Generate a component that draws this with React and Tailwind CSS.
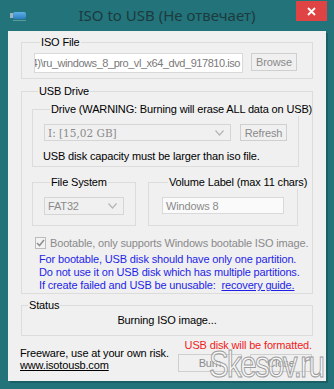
import React from 'react'

function Chevron() {
  return (
    <svg width="9" height="6" viewBox="0 0 9 6" className="shrink-0">
      <polyline points="0.5,0.5 4.5,5 8.5,0.5" fill="none" stroke="#b5b5b5" strokeWidth="1.2" />
    </svg>
  )
}

function Group({ label, className = '', children }) {
  return (
    <fieldset className={`min-w-0 border border-[#dcdcdc] ${className}`}>
      <legend className="ml-[6px] px-[1px] leading-[14px] text-black whitespace-nowrap">{label}</legend>
      {children}
    </fieldset>
  )
}

function DisabledButton({ children, className = '' }) {
  return (
    <div className={`flex items-center justify-center border border-[#cfcfcf] bg-[#f0f0f0] text-[#8a8a8a] ${className}`}>
      {children}
    </div>
  )
}

export default function App() {
  return (
    <div className="w-[334px] h-[389px] bg-[#22737a] flex flex-col relative overflow-hidden font-['Liberation_Sans',Arial,sans-serif]">
      {/* Title bar */}
      <div className="h-[31px] grid grid-cols-[1fr_auto_1fr] shrink-0">
        <div className="pl-[10px] pt-[12px]">
          <div className="flex items-center">
            <div className="w-[3px] h-[5px] bg-[#9fb3bd]" />
            <div className="w-[13px] h-[7px] rounded-[2px] bg-gradient-to-b from-[#5fb0e6] to-[#2a7fc0]" />
          </div>
          <div className="ml-[3px] mt-[1px] w-[13px] h-[1px] bg-[#5a9aa0]" />
        </div>
        <div className="pt-[5px] text-[15px] leading-[20px] text-[#1d3b3e] whitespace-nowrap font-['Noto_Sans',sans-serif]">
          ISO to USB (Не отвечает)
        </div>
        <div className="flex justify-end pr-[7px] pt-[1px]">
          <div className="w-[31px] h-[20px] bg-[#e04343] flex items-center justify-center">
            <svg width="9" height="9" viewBox="0 0 9 9">
              <path d="M1 1 L8 8 M8 1 L1 8" stroke="#fff" strokeWidth="1.8" />
            </svg>
          </div>
        </div>
      </div>

      {/* Client area */}
      <div className="mx-[8px] h-[350px] bg-[#f0f0f0] px-[13px] pt-[4px] shadow-[2px_2px_0_#1b5f66] text-[11px] tracking-[-0.15px] leading-[14px] text-black whitespace-nowrap">
        <Group label="ISO File" className="pl-[12px] pt-[4px] pb-[5px]">
          <div className="flex items-start gap-[8px]">
            <div className="w-[209px] h-[20px] border border-[#d9d9d9] bg-white flex justify-end items-center overflow-hidden pr-[2px] text-[#7a7a7a]">
              <span className="tracking-[-0.45px]">D:\Загрузки\Windows 8 (x64)\ru_windows_8_pro_vl_x64_dvd_917810.iso</span>
            </div>
            <DisabledButton className="w-[46px] h-[18px]">Browse</DisabledButton>
          </div>
        </Group>

        <Group label="USB Drive" className="mt-[5px] pl-[10px] pr-[13px] pb-[1px]">
          <Group label="Drive (WARNING: Burning will erase ALL data on USB)" className="mt-[4px] pl-[11px] pt-[8px] pb-[3px]">
            <div className="flex items-start gap-[9px]">
              <div className="w-[187px] h-[17px] border border-[#d5d5d5] bg-[#f0f0f0] flex items-center justify-between pl-[3px] pr-[6px] text-[#8a8a8a] font-['DejaVu_Serif',serif] text-[10.5px] tracking-normal">
                <span>I: [15,02 GB]</span>
                <Chevron />
              </div>
              <DisabledButton className="w-[47px] h-[17px]">Refresh</DisabledButton>
            </div>
            <div className="mt-[8px] -ml-[1px]">USB disk capacity must be larger than iso file.</div>
          </Group>

          <div className="flex gap-[12px] mt-[8px]">
            <Group label="File System" className="w-[104px] pl-[11px] pt-[8px] pb-[10px]">
              <div className="w-[80px] h-[18px] border border-[#d5d5d5] bg-[#f0f0f0] flex items-center justify-between pl-[3px] pr-[6px] text-[#8a8a8a]">
                <span>FAT32</span>
                <Chevron />
              </div>
            </Group>
            <Group label="Volume Label (max 11 chars)" className="w-[150px] pl-[13px] pt-[8px] pb-[11px]">
              <div className="w-[122px] h-[17px] border border-[#d9d9d9] bg-[#fafafa] flex items-center pl-[3px] text-[#8a8a8a]">
                Windows 8
              </div>
            </Group>
          </div>

          <div className="flex items-center gap-[4px] mt-[10px] pl-[3px] text-[#8a8a8a]">
            <div className="w-[12px] h-[12px] border border-[#bcbcbc] bg-[#f3f3f3] flex items-center justify-center">
              <svg width="9" height="8" viewBox="0 0 9 8">
                <polyline points="1,4 3.5,6.5 8,1" fill="none" stroke="#8f8f8f" strokeWidth="1.6" />
              </svg>
            </div>
            <span>Bootable, only supports Windows bootable ISO image.</span>
          </div>

          <div className="mt-[3px] pl-[7px] text-[#1f1fe8] leading-[13px]">
            <div>For bootable, USB disk should have only one partition.</div>
            <div>Do not use it on USB disk which has multiple partitions.</div>
            <div>
              If create failed and USB be unusable:&nbsp;&nbsp;<span className="underline">recovery guide.</span>
            </div>
          </div>
        </Group>

        <Group label="Status" className="mt-[4px] pb-[8px]">
          <div className="pt-[1px] text-center">Burning ISO image...</div>
        </Group>

        <div className="flex justify-between mt-[2px]">
          <div className="pt-[9px] -ml-[1px] leading-[12px]">
            <div>Freeware, use at your own risk.</div>
            <div className="underline">www.isotousb.com</div>
          </div>
          <div className="flex flex-col items-end pr-[1px]">
            <div className="text-[#f01c1c]">USB disk will be formatted.</div>
            <div className="flex gap-[8px] mt-[2px]">
              <DisabledButton className="w-[64px] h-[18px]">Burn</DisabledButton>
              <DisabledButton className="w-[62px] h-[18px]">Close</DisabledButton>
            </div>
          </div>
        </div>
      </div>

      {/* watermark */}
      <div className="absolute left-[209px] top-[345px] text-[36px] leading-[40px] tracking-[-2px] text-[rgba(255,255,255,0.55)] [-webkit-text-stroke:1px_#9a9a9a] scale-x-[0.82] origin-left pointer-events-none">
        Skesov.ru
      </div>
    </div>
  )
}
